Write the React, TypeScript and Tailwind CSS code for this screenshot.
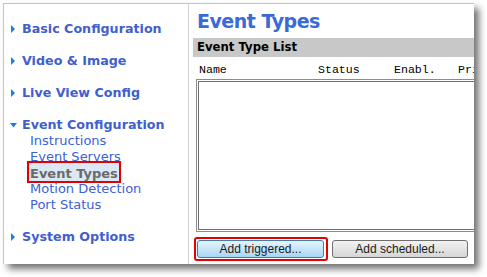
import React from 'react';

const sans = { fontFamily: '"DejaVu Sans", Verdana, sans-serif' };

const Arrow = ({ open }: { open?: boolean }) => (
  <span className="w-[11px] h-4 flex items-center shrink-0">
    {open ? (
      <svg width="7" height="5" viewBox="0 0 7 5" className="-ml-[1px]">
        <polygon points="0,0 7,0 3.5,4.5" fill="#1a7ee6" />
      </svg>
    ) : (
      <svg width="4" height="8" viewBox="0 0 4 8">
        <polygon points="0,0 4,4 0,8" fill="#1a7ee6" />
      </svg>
    )}
  </span>
);

const MainItem = ({ label, open }: { label: string; open?: boolean }) => (
  <div className="flex items-center pt-4 pl-[7px] leading-4">
    <Arrow open={open} />
    <span className="text-[12.7px] font-bold text-[#3f5fcf] whitespace-nowrap">{label}</span>
  </div>
);

const subItems = ['Instructions', 'Event Servers', 'Event Types', 'Motion Detection', 'Port Status'];

export default function App() {
  return (
    <div className="w-[487px] h-[277px] bg-white pl-[3px] pt-[3px]" style={sans}>
      <div className="w-[471px] h-[261px] flex bg-white border-l border-t border-[#c4c4c4] shadow-[5px_5px_7px_rgba(0,0,0,0.55)] overflow-hidden">
        {/* sidebar */}
        <div className="w-[185px] shrink-0 border-r border-[#d4d4d4] pt-[1px]">
          <MainItem label="Basic Configuration" />
          <MainItem label="Video & Image" />
          <MainItem label="Live View Config" />
          <MainItem label="Event Configuration" open />
          <div className="pl-[26px]">
            {subItems.map((s) =>
              s === 'Event Types' ? (
                <div key={s} className="relative h-4 leading-4">
                  <div className="absolute -left-[3px] -top-[4px] w-[94px] h-[22px] border-2 border-[#e30000] bg-[#dbe8f6]" />
                  <span className="relative text-[13px] font-bold text-[#6a6a6a]">{s}</span>
                </div>
              ) : (
                <div key={s} className="h-4 leading-4 text-[13px] text-[#3a63d6] whitespace-nowrap">
                  {s}
                </div>
              )
            )}
          </div>
          <MainItem label="System Options" />
        </div>

        {/* content */}
        <div className="flex-1 min-w-0 pl-1 pt-[5px]">
          <h1 className="pl-1 text-[19px] tracking-[-0.5px] leading-6 font-bold text-[#3a6ad8] whitespace-nowrap">Event Types</h1>
          <div className="mt-[5px] h-[19px] bg-[#c8c8c8] pl-1 flex items-center">
            <span className="text-[11.7px] font-bold text-black whitespace-nowrap">Event Type List</span>
          </div>
          <div
            className="flex h-[14px] mt-[6px] pl-[6px] text-[11.6px] leading-[14px] text-black whitespace-nowrap"
            style={{ fontFamily: '"Liberation Mono", "Courier New", monospace' }}
          >
            <span className="w-[119px] shrink-0">Name</span>
            <span className="w-[76px] shrink-0">Status</span>
            <span className="w-[64px] shrink-0">Enabl.</span>
            <span className="shrink-0">Priority</span>
          </div>
          <div className="mt-[2px] ml-[3px] w-[300px] h-[153px] border border-[#8c8c8c] p-[1px]">
            <div className="w-full h-full border border-[#6e6e6e] bg-white" />
          </div>
          <div
            className="flex gap-2 mt-[8px] ml-[4px] text-[12px] text-[#1c1c1c]"
            style={{ fontFamily: '"Liberation Sans", Arial, sans-serif' }}
          >
            <div className="relative">
              <div className="absolute -left-[3px] -top-[3px] -right-[4px] -bottom-[3px] border-2 border-[#e30000] rounded-[3px]" />
              <button className="relative w-[127px] h-[18px] rounded-[3px] border border-[#3c7fb1] bg-gradient-to-b from-[#e5f4fc] to-[#a9d6f5] leading-4">
                Add triggered...
              </button>
            </div>
            <button className="w-[136px] h-[18px] rounded-[3px] border border-[#707070] bg-gradient-to-b from-[#f2f2f2] to-[#d6d6d6] leading-4">
              Add scheduled...
            </button>
          </div>
        </div>
      </div>
    </div>
  );
}
